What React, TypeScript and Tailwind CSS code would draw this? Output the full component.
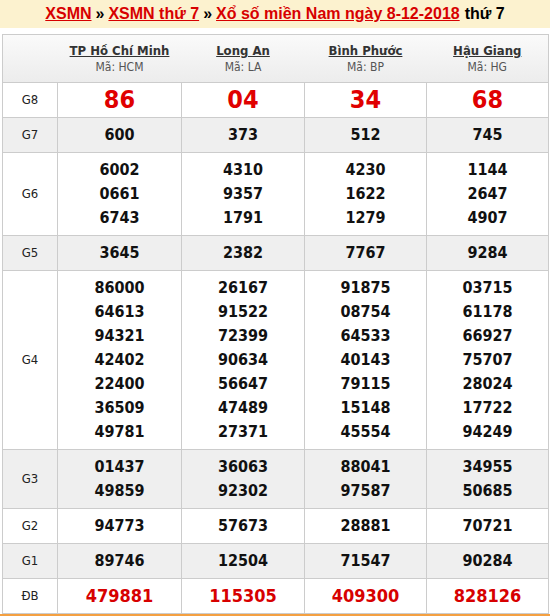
import React from "react";

type Prize = { label: string; nums: string[][]; big?: boolean; special?: boolean };

const provinces = [
  { name: "TP Hồ Chí Minh", code: "HCM" },
  { name: "Long An", code: "LA" },
  { name: "Bình Phước", code: "BP" },
  { name: "Hậu Giang", code: "HG" },
];

const prizes: Prize[] = [
  { label: "G8", nums: [["86"], ["04"], ["34"], ["68"]], big: true },
  { label: "G7", nums: [["600"], ["373"], ["512"], ["745"]] },
  {
    label: "G6",
    nums: [
      ["6002", "0661", "6743"],
      ["4310", "9357", "1791"],
      ["4230", "1622", "1279"],
      ["1144", "2647", "4907"],
    ],
  },
  { label: "G5", nums: [["3645"], ["2382"], ["7767"], ["9284"]] },
  {
    label: "G4",
    nums: [
      ["86000", "64613", "94321", "42402", "22400", "36509", "49781"],
      ["26167", "91522", "72399", "90634", "56647", "47489", "27371"],
      ["91875", "08754", "64533", "40143", "79115", "15148", "45554"],
      ["03715", "61178", "66927", "75707", "28024", "17722", "94249"],
    ],
  },
  {
    label: "G3",
    nums: [
      ["01437", "49859"],
      ["36063", "92302"],
      ["88041", "97587"],
      ["34955", "50685"],
    ],
  },
  { label: "G2", nums: [["94773"], ["57673"], ["28881"], ["70721"]] },
  { label: "G1", nums: [["89746"], ["12504"], ["71547"], ["90284"]] },
  { label: "ĐB", nums: [["479881"], ["115305"], ["409300"], ["828126"]], special: true },
];

const tahoma = { fontFamily: '"DejaVu Sans Condensed", "DejaVu Sans", sans-serif' };

export default function App() {
  return (
    <div className="w-[550px] h-[616px] bg-white overflow-hidden">
      {/* breadcrumb title */}
      <div className="h-[28px] bg-[#fcf2cf] flex items-center justify-center font-['Liberation_Sans',Arial,sans-serif] font-bold text-[16px] text-black">
        <a href="#" className="text-[#d70000] underline">XSMN</a>
        <span className="mx-[4px]">»</span>
        <a href="#" className="text-[#d70000] underline">XSMN thứ 7</a>
        <span className="mx-[4px]">»</span>
        <a href="#" className="text-[#d70000] underline">Xổ số miền Nam ngày 8-12-2018</a>
        <span className="ml-[5px]">thứ 7</span>
      </div>

      <div className="mt-[6px] ml-[2px] w-[547px]" style={tahoma}>
        <table className="w-full table-fixed border-collapse border border-[#cccccc] text-center">
          <colgroup>
            <col className="w-[55px]" />
            <col className="w-[124px]" />
            <col className="w-[123px]" />
            <col className="w-[122px]" />
            <col className="w-[122px]" />
          </colgroup>
          <thead>
            <tr className="h-[48px] bg-gradient-to-b from-[#fafafa] to-[#ececec]">
              <th className="border-b border-[#cccccc]"></th>
              {provinces.map((p) => (
                <th key={p.code} className="border-b border-[#cccccc] align-middle pt-[1px]">
                  <a href="#" className="block text-[13px] font-bold text-[#333333] underline leading-[17px]">
                    {p.name}
                  </a>
                  <div className="text-[12px] font-normal text-[#555555] leading-[17px]">Mã: {p.code}</div>
                </th>
              ))}
            </tr>
          </thead>
          <tbody>
            {prizes.map((row, i) => (
              <tr key={row.label} className={i % 2 === 1 ? "bg-[#efefef]" : "bg-white"}>
                <td className="border border-[#cccccc] text-[13px] text-[#222222] align-middle">{row.label}</td>
                {row.nums.map((col, j) => (
                  <td key={j} className="border border-[#cccccc] py-[5px] align-middle">
                    {col.map((n) => (
                      <div
                        key={n}
                        className={
                          row.big
                            ? "text-[25px] leading-[24px] font-bold text-[#e00000]"
                            : row.special
                            ? "text-[18px] leading-[24px] font-bold text-[#d70000]"
                            : "text-[16px] leading-[24px] font-bold text-[#111111]"
                        }
                      >
                        {n}
                      </div>
                    ))}
                  </td>
                ))}
              </tr>
            ))}
          </tbody>
        </table>
        <div className="h-[3px] bg-[#f4a041] -ml-[2px] w-[550px]"></div>
      </div>
    </div>
  );
}
